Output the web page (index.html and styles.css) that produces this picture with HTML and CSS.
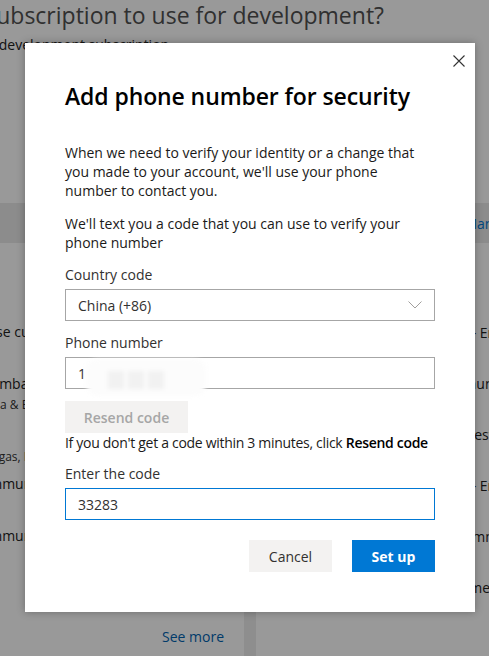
FILE: index.html
```html
<!DOCTYPE html>
<html lang="en">
<head>
    <meta charset="UTF-8">
    <title>Add phone number for security</title>
    <link rel="stylesheet" href="styles.css">
</head>
<body>
    <div class="page">
        <h1 class="pageTitle">Which subscription to use for development?</h1>
        <p class="pageSub">Select one development subscription</p>
        <div class="cards">
            <section class="card">
                <div class="cardHead"><span class="headText">Recent</span></div>
                <ul class="rowList leftList">
                    <li><p class="rowTitle">My Enterprise customer</p></li>
                    <li><p class="rowTitle">Contoso Mumbai</p><p class="rowSub">Tourism, Media &amp; Entertainment</p></li>
                    <li class="shortRow"><p class="rowTitle">&nbsp;</p><p class="rowSub">Events, Las Vegas, NV</p></li>
                    <li><p class="rowTitle">Startup Community</p></li>
                    <li><p class="rowTitle">Startup Community</p></li>
                </ul>
                <div class="seeMoreRow"><a class="seeMore" href="#">See more</a></div>
            </section>
            <section class="card">
                <div class="cardHead"><span class="headText">Azure subscriptions</span><a class="headLink" href="#">Manage</a></div>
                <ul class="rowList rightList">
                    <li><p class="rowTitle">Visual Studio Premium – Enterprise</p></li>
                    <li><p class="rowTitle">MSDN Platforms: Community</p></li>
                    <li><p class="rowTitle">Azure Pass Sponsored Test</p></li>
                    <li><p class="rowTitle">Visual Studio Premium – Enterprise</p></li>
                    <li><p class="rowTitle">Dev Essentials Packs Community</p></li>
                    <li><p class="rowTitle">Visual Studio Premium member</p><p class="rowSub">Created 1/11/2019</p></li>
                </ul>
            </section>
        </div>
    </div>
    <div class="overlay"></div>

    <div class="dialog">
        <button class="closeButton" aria-label="Close">
            <svg width="12" height="12" viewBox="0 0 12 12"><path d="M0.5 0.5 L11.5 11.5 M11.5 0.5 L0.5 11.5" stroke="#333" stroke-width="1.1" fill="none"/></svg>
        </button>
        <h2 class="dialogTitle">Add phone number for security</h2>
        <p class="bodyText first">When we need to verify your identity or a change that you made to your account, we'll use your phone number to contact you.</p>
        <p class="bodyText">We'll text you a code that you can use to verify your phone number</p>

        <label class="fieldLabel countryLabel">Country code</label>
        <div class="selectBox">
            <span>China (+86)</span>
            <svg width="14" height="8" viewBox="0 0 14 8"><path d="M0.5 0.5 L7 7 L13.5 0.5" stroke="#a19f9d" stroke-width="1" fill="none"/></svg>
        </div>

        <label class="fieldLabel">Phone number</label>
        <div class="textBox phoneBox">
            <span>1</span>
            <div class="blurBlob"><i></i><i></i><i></i></div>
        </div>

        <button class="resendButton" disabled>Resend code</button>
        <p class="hintText">If you don't get a code within 3 minutes, click <b>Resend code</b></p>

        <label class="fieldLabel">Enter the code</label>
        <div class="textBox codeBox"><span>33283</span></div>

        <div class="actions">
            <button class="cancelButton">Cancel</button>
            <button class="setupButton">Set up</button>
        </div>
    </div>
</body>
</html>
```

FILE: styles.css
```css
*{
    margin: 0;
    padding: 0;
    box-sizing: border-box;
}
body{
    width: 489px;
    height: 656px;
    overflow: hidden;
    position: relative;
    background-color: #fff;
    font-family: "Open Sans", "Noto Sans", sans-serif;
    color: #1b1a19;
}
/* page behind the dialog */
.page{
    margin-left: -96px;
    width: 700px;
}
.pageTitle{
    margin-left: 9px;
    font-size: 23px;
    font-weight: 400;
    line-height: 30px;
    color: #505050;
}
.pageSub{
    margin: 5px 0 0 24px;
    font-size: 14px;
    line-height: 20px;
    color: #222;
}
.cards{
    display: grid;
    grid-template-columns: 340px 1fr;
    column-gap: 12px;
    margin-top: 148px;
    height: 460px;
    background-color: #ededed;
}
.card{
    background-color: #fff;
}
.cardHead{
    height: 40px;
    background-color: #e9e9e9;
    display: flex;
    align-items: center;
    padding-left: 20px;
    font-size: 14px;
}
.headText{
    color: #333;
}
.headLink{
    margin-left: 60px;
    color: #0078d4;
    text-decoration: none;
    font-size: 14px;
}
.rowList{
    list-style: none;
}
.leftList{
    padding: 79px 0 0 16px;
}
.leftList li{
    height: 52px;
}
.leftList li.shortRow{
    height: 48px;
}
.rightList{
    padding: 80px 0 0 62px;
}
.rightList li{
    height: 51px;
}
.rowTitle{
    font-size: 14px;
    line-height: 20px;
    color: #222;
    white-space: nowrap;
}
.rowSub{
    font-size: 12px;
    line-height: 21px;
    color: #333;
    white-space: nowrap;
}
.rightList .rowSub{
    line-height: 18px;
}
.seeMoreRow{
    display: flex;
    justify-content: flex-end;
    padding: 49px 20px 0 0;
}
.seeMore{
    font-size: 14px;
    line-height: 20px;
    color: #0063b1;
    text-decoration: none;
}
.overlay{
    position: absolute;
    inset: 0;
    background-color: rgba(0, 0, 0, 0.4);
}
/* dialog */
.dialog{
    position: absolute;
    left: 25px;
    top: 43px;
    width: 450px;
    height: 569px;
    padding: 37px 40px 40px;
    background-color: #fff;
    box-shadow: 0 0 8px rgba(0, 0, 0, 0.3);
}
.closeButton{
    position: absolute;
    right: 10px;
    top: 12px;
    width: 12px;
    height: 12px;
    border: none;
    background: none;
    display: flex;
}
.dialogTitle{
    font-size: 23px;
    font-weight: 600;
    line-height: 32px;
    color: #000;
    letter-spacing: -0.1px;
}
.bodyText{
    margin-top: 14px;
    max-width: 355px;
    font-size: 14px;
    line-height: 19px;
    color: #1b1a19;
}
.bodyText.first{
    margin-top: 31px;
}
.fieldLabel{
    display: block;
    margin-top: 12px;
    font-size: 14px;
    line-height: 19px;
    color: #323130;
}
.fieldLabel.countryLabel{
    margin-top: 13px;
}
.selectBox,
.textBox{
    margin-top: 5px;
    height: 32px;
    border: 1px solid #a6a6a6;
    display: flex;
    align-items: center;
    justify-content: space-between;
    padding: 0 12px;
    font-size: 14px;
    color: #323130;
}
.phoneBox{
    position: relative;
}
.blurBlob{
    position: absolute;
    left: 20px;
    top: 1px;
    width: 120px;
    height: 37px;
    background-color: #fcfcfc;
    border-radius: 12px;
    filter: blur(2px);
    display: flex;
    gap: 4px;
    padding: 12px 0 0 22px;
}
.blurBlob i{
    display: block;
    width: 16px;
    height: 18px;
    background-color: #f1f1f1;
}
.codeBox{
    border-color: #0078d4;
}
.resendButton{
    display: block;
    margin-top: 12px;
    width: 123px;
    height: 32px;
    border: none;
    background-color: #f3f2f1;
    color: #a6a6a6;
    font-family: inherit;
    font-size: 14px;
    font-weight: 600;
}
.hintText{
    font-size: 14px;
    line-height: 19px;
    color: #1b1a19;
    white-space: nowrap;
    letter-spacing: -0.3px;
}
.hintText b{
    font-weight: 600;
    color: #000;
}
.actions{
    margin-top: 20px;
    display: flex;
    justify-content: flex-end;
    gap: 20px;
}
.cancelButton,
.setupButton{
    width: 83px;
    height: 32px;
    border: none;
    font-family: inherit;
    font-size: 14px;
}
.cancelButton{
    background-color: #f3f2f1;
    color: #323130;
}
.setupButton{
    background-color: #0078d4;
    color: #fff;
    font-weight: 700;
}
```
